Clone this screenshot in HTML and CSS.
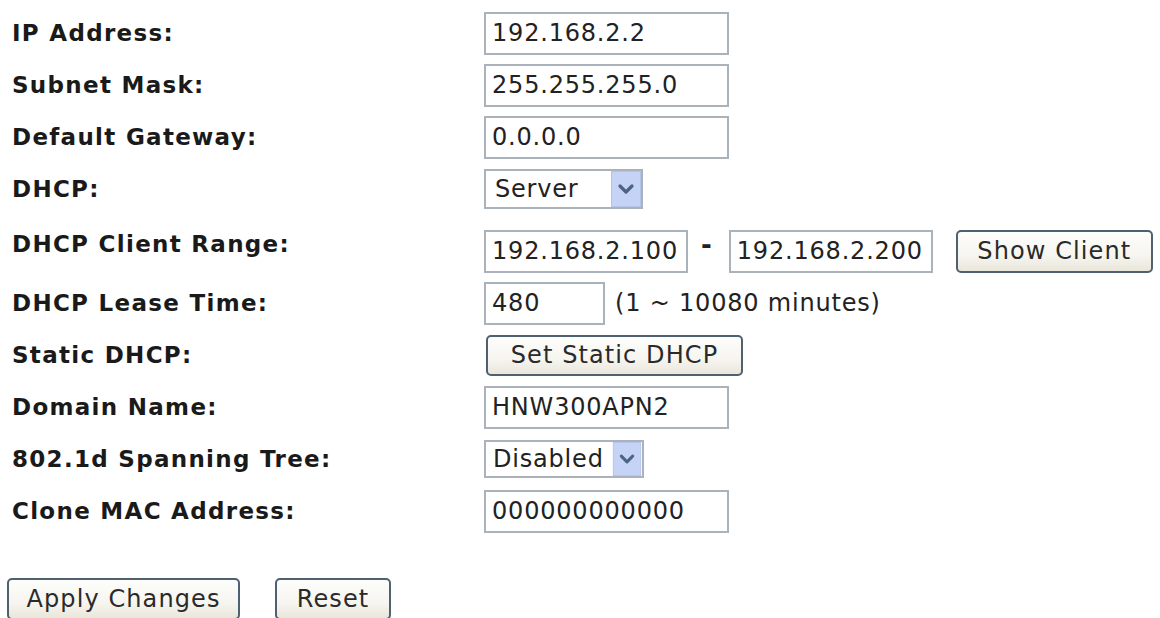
FILE: index.html
```html
<!DOCTYPE html>
<html lang="en">
<head>
<meta charset="utf-8">
<title>LAN Interface Setup</title>
<link rel="stylesheet" href="styles.css">
</head>
<body>
<form class="lan-form">
  <div class="row">
    <span class="label">IP Address:</span>
    <div class="field"><input class="text w-full" type="text" value="192.168.2.2"></div>
  </div>
  <div class="row">
    <span class="label">Subnet Mask:</span>
    <div class="field"><input class="text w-full" type="text" value="255.255.255.0"></div>
  </div>
  <div class="row">
    <span class="label">Default Gateway:</span>
    <div class="field"><input class="text w-full" type="text" value="0.0.0.0"></div>
  </div>
  <div class="row">
    <span class="label">DHCP:</span>
    <div class="field">
      <select class="dropdown"><option>Server</option><option>Client</option><option>Disabled</option></select>
    </div>
  </div>
  <div class="row row-range">
    <span class="label label-raised">DHCP Client Range:</span>
    <div class="field">
      <input class="text w-range" type="text" value="192.168.2.100">
      <span class="dash">-</span>
      <input class="text w-range" type="text" value="192.168.2.200">
      <button class="btn btn-client" type="button">Show Client</button>
    </div>
  </div>
  <div class="row">
    <span class="label">DHCP Lease Time:</span>
    <div class="field">
      <input class="text w-lease" type="text" value="480">
      <span class="hint">(1 ~ 10080 minutes)</span>
    </div>
  </div>
  <div class="row">
    <span class="label">Static DHCP:</span>
    <div class="field"><button class="btn btn-static" type="button">Set Static DHCP</button></div>
  </div>
  <div class="row">
    <span class="label">Domain Name:</span>
    <div class="field"><input class="text w-full" type="text" value="HNW300APN2"></div>
  </div>
  <div class="row">
    <span class="label">802.1d Spanning Tree:</span>
    <div class="field">
      <select class="dropdown dropdown-short"><option>Disabled</option><option>Enabled</option></select>
    </div>
  </div>
  <div class="row">
    <span class="label">Clone MAC Address:</span>
    <div class="field"><input class="text w-full" type="text" value="000000000000"></div>
  </div>
  <div class="actions">
    <button class="btn btn-apply" type="submit">Apply Changes</button>
    <button class="btn btn-reset" type="reset">Reset</button>
  </div>
</form>
</body>
</html>
```
FILE: styles.css
```css
html, body {
  margin: 0;
  padding: 0;
  background: #ffffff;
}

body {
  font-family: "DejaVu Sans", Verdana, sans-serif;
  color: #1c1c1c;
  overflow: hidden;
}

.lan-form {
  display: flex;
  flex-direction: column;
  padding: 7px 0 0 12px;
}

.row {
  display: flex;
  align-items: center;
  height: 52px;
}

.row-range {
  margin-top: 10px;
}

.label {
  width: 472px;
  flex: none;
  font-weight: bold;
  font-size: 23px;
  letter-spacing: 1.3px;
  color: #1a1a1a;
}

.label-raised {
  padding-bottom: 14px;
}

.field {
  display: flex;
  align-items: center;
}

/* text boxes */
.text {
  box-sizing: border-box;
  height: 43px;
  margin: 0;
  padding: 0 0 0 6px;
  border: 2px solid #aab3bc;
  background: #fff;
  font-family: "DejaVu Sans", Verdana, sans-serif;
  font-size: 24px;
  letter-spacing: 0.8px;
  color: #222;
  outline: none;
}

.w-full { width: 245px; }
.w-range { width: 204px; }
.w-lease { width: 121px; }

.dash {
  font-size: 26px;
  font-weight: bold;
  margin: -12px 17px 0 13px;
  color: #222;
}

.hint {
  font-size: 24px;
  letter-spacing: 0.8px;
  margin-left: 10px;
  color: #222;
}

/* drop-down lists */
.dropdown {
  box-sizing: border-box;
  width: 159px;
  height: 40px;
  margin: 0;
  padding: 0 0 0 9px;
  border: 2px solid #aab3bc;
  border-radius: 0;
  font-family: "DejaVu Sans", Verdana, sans-serif;
  font-size: 24px;
  letter-spacing: 0.8px;
  color: #222;
  -webkit-appearance: none;
  appearance: none;
  outline: none;
  background-color: #fff;
  background-image: url("data:image/svg+xml,%3Csvg xmlns='http://www.w3.org/2000/svg' width='30' height='36' viewBox='0 0 30 36'%3E%3Crect x='0.5' y='0.5' width='29' height='35' fill='%23c4d3f6' stroke='%23b3c3ea'/%3E%3Cpath d='M9 15l6 6 6-6' fill='none' stroke='%234d6287' stroke-width='3.2' stroke-linecap='round' stroke-linejoin='round'/%3E%3C/svg%3E");
  background-repeat: no-repeat;
  background-position: right 0px center;
  background-size: 30px 36px;
}

.dropdown-short {
  width: 160px;
  height: 38px;
  padding-left: 7px;
  background-size: 30px 34px;
}

/* push buttons */
.btn {
  box-sizing: border-box;
  height: 42px;
  margin: 0;
  padding: 0;
  border: 2px solid #4f6070;
  border-radius: 5px;
  background: linear-gradient(#fdfdfb, #f6f5f0 60%, #e9e6da);
  font-family: "DejaVu Sans", Verdana, sans-serif;
  font-size: 24px;
  letter-spacing: 1.1px;
  color: #2a2a2a;
}

.btn-client {
  width: 197px;
  height: 43px;
  margin-left: 23px;
}

.btn-static {
  width: 257px;
  height: 41px;
  margin-left: 2px;
}

.actions {
  display: flex;
  gap: 35px;
  margin: 41px 0 0 -5px;
}

.btn-apply { width: 233px; }
.btn-reset { width: 116px; }
```
